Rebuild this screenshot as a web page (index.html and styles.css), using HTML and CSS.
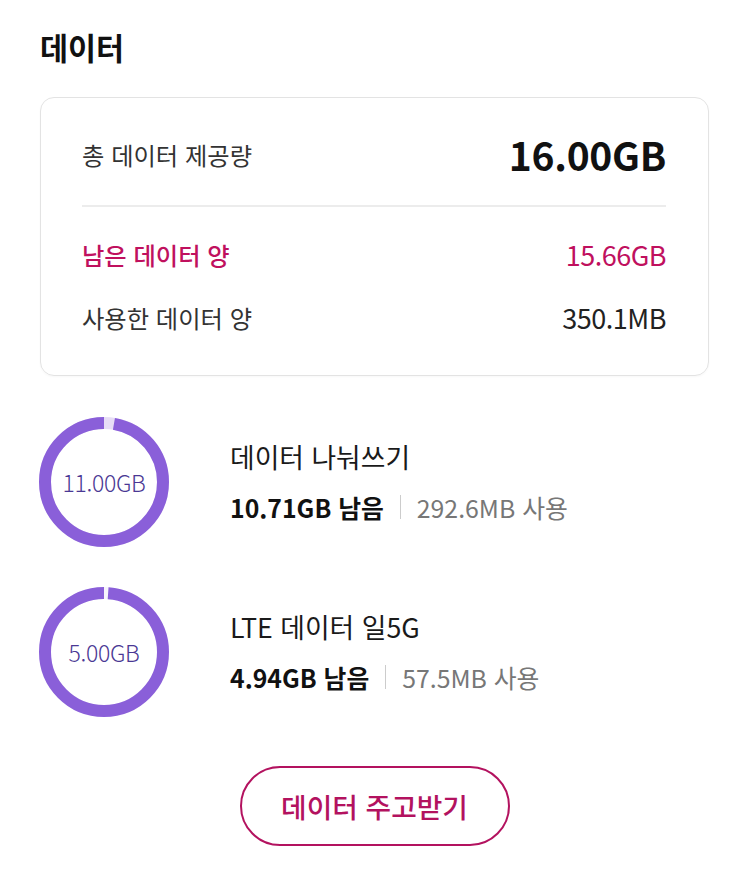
FILE: index.html
```html
<!DOCTYPE html>
<html lang="ko">
<head>
<meta charset="utf-8">
<title>데이터</title>
<link rel="stylesheet" href="styles.css">
</head>
<body>
<main class="page">
  <h1 class="title">데이터</h1>

  <section class="card">
    <div class="row row-total">
      <span class="label">총 데이터 제공량</span>
      <span class="value-total">16.00GB</span>
    </div>
    <hr class="divider">
    <div class="row row-remain">
      <span class="label">남은 데이터 양</span>
      <span class="value">15.66GB</span>
    </div>
    <div class="row row-used">
      <span class="label">사용한 데이터 양</span>
      <span class="value">350.1MB</span>
    </div>
  </section>

  <section class="plans">
    <div class="plan">
      <div class="ring">
        <svg viewBox="0 0 130 130" width="130" height="130">
          <circle cx="65" cy="65" r="59" class="ring-used"/>
          <circle cx="65" cy="65" r="59" class="ring-left" stroke-dasharray="360.7 370.7" stroke-dashoffset="-10" transform="rotate(-90 65 65)"/>
        </svg>
        <span class="ring-text">11.00GB</span>
      </div>
      <div class="plan-info">
        <div class="plan-name">데이터 나눠쓰기</div>
        <div class="plan-stat"><strong>10.71GB 남음</strong><span class="sep"></span><span class="used">292.6MB 사용</span></div>
      </div>
    </div>

    <div class="plan">
      <div class="ring">
        <svg viewBox="0 0 130 130" width="130" height="130">
          <circle cx="65" cy="65" r="59" class="ring-gap"/>
          <circle cx="65" cy="65" r="59" class="ring-left" stroke-dasharray="366.5 370.7" stroke-dashoffset="-4.2" transform="rotate(-90 65 65)"/>
        </svg>
        <span class="ring-text">5.00GB</span>
      </div>
      <div class="plan-info">
        <div class="plan-name">LTE 데이터 일5G</div>
        <div class="plan-stat"><strong>4.94GB 남음</strong><span class="sep"></span><span class="used">57.5MB 사용</span></div>
      </div>
    </div>
  </section>

  <div class="actions">
    <button class="btn" type="button">데이터 주고받기</button>
  </div>
</main>
</body>
</html>
```

FILE: styles.css
```css
* { box-sizing: border-box; }

html, body {
  margin: 0;
  padding: 0;
  background: #ffffff;
}

body {
  font-family: "Noto Sans CJK KR", "Noto Sans", sans-serif;
  color: #111111;
}

.page {
  width: 750px;
  padding: 22px 41px 0 40px;
}

.title {
  margin: 0;
  font-size: 30.5px;
  font-weight: 700;
  line-height: 50px;
  color: #111;
}

.card {
  margin-top: 25px;
  border: 1px solid #e3e3e3;
  border-radius: 14px;
  padding: 30px 42px 38px 41px;
  box-shadow: 0 1px 2px rgba(0,0,0,0.03);
}

.row {
  display: flex;
  justify-content: space-between;
  align-items: center;
}

.row-total { height: 52px; }

.label {
  font-size: 24.3px;
  color: #333333;
  font-weight: 400;
}

.value-total {
  font-size: 39px;
  font-weight: 700;
  color: #111;
  letter-spacing: -0.3px;
}

.divider {
  margin: 25px 0 0 0;
  border: 0;
  border-top: 2px solid #ececec;
  height: 0;
}

.row-remain {
  height: 40px;
  margin-top: 27px;
}

.row-remain .label {
  color: #c0105e;
  font-weight: 500;
}

.row-remain .value {
  color: #c0105e;
}

.row-used {
  height: 40px;
  margin-top: 23px;
}

.value {
  font-size: 27px;
  color: #222;
  letter-spacing: -0.5px;
}

.plans {
  margin-top: 41px;
  display: flex;
  flex-direction: column;
  gap: 40px;
}

.plan {
  display: flex;
  align-items: center;
  gap: 61px;
  margin-left: -1px;
}

.ring {
  position: relative;
  width: 130px;
  height: 130px;
  flex: none;
}

.ring svg { display: block; }

.ring circle {
  fill: none;
  stroke-width: 12;
}

.ring-used { stroke: #e7ddf6; }
.ring-gap { stroke: #f7f4fc; }
.ring-left { stroke: #8a5fd9; }

.ring-text {
  position: absolute;
  inset: 0;
  display: flex;
  align-items: center;
  justify-content: center;
  font-size: 23px;
  color: #4a3894;
  font-weight: 300;
  letter-spacing: -0.3px;
}

.plan-info {
  display: flex;
  flex-direction: column;
}

.plan-name {
  font-size: 26.8px;
  line-height: 50px;
  color: #1a1a1a;
}

.plan-stat {
  font-size: 24.8px;
  line-height: 50px;
  display: flex;
  align-items: center;
}

.plan-stat strong {
  font-weight: 700;
  color: #111;
}

.sep {
  display: inline-block;
  width: 1px;
  height: 24px;
  background: #cccccc;
  margin: 0 16px;
}

.used {
  color: #777777;
}

.actions {
  display: flex;
  justify-content: center;
  margin-top: 49px;
}

.btn {
  width: 270px;
  height: 80px;
  border: 2px solid #b3125f;
  border-radius: 40px;
  background: #fff;
  color: #b3125f;
  font-family: "Noto Sans CJK KR", "Noto Sans", sans-serif;
  font-size: 27.8px;
  font-weight: 500;
  padding: 0;
  cursor: pointer;
}
```
